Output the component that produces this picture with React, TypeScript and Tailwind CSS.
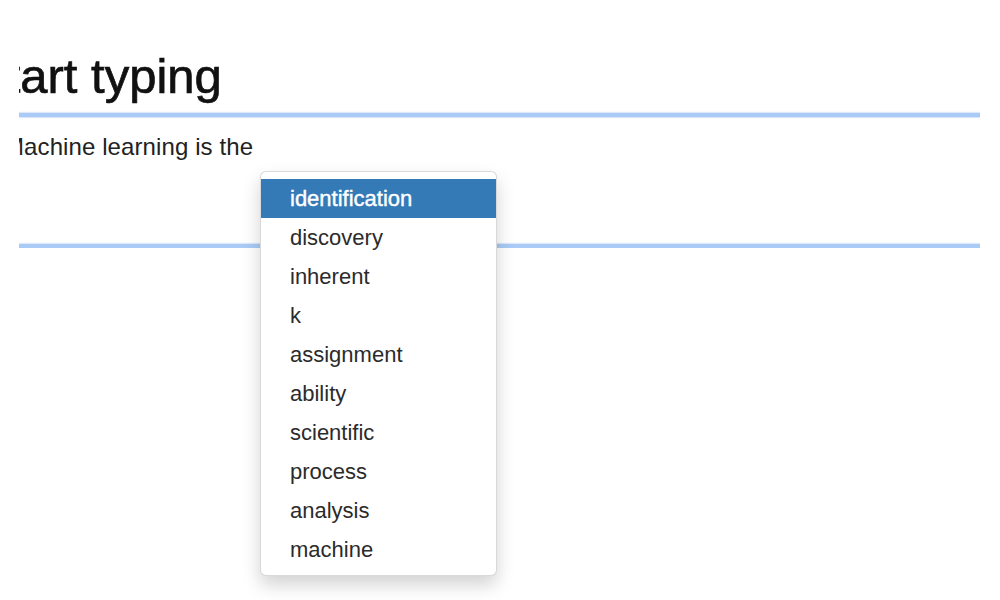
import React from "react";

const items = [
  "identification",
  "discovery",
  "inherent",
  "k",
  "assignment",
  "ability",
  "scientific",
  "process",
  "analysis",
  "machine",
];

export default function App() {
  return (
    <div
      className="relative w-[1000px] h-[600px] overflow-hidden bg-white"
      style={{ fontFamily: '"Liberation Sans", Arial, sans-serif' }}
    >
      <div className="ml-[19px] w-[961px] overflow-hidden pt-[52px]">
        <h1 className="-ml-[45px] text-[49px] leading-[48px] font-normal text-[#111] whitespace-nowrap [-webkit-text-stroke:0.7px_#111]">
          Start typing
        </h1>
        <div className="mt-[13px] h-[4px] bg-[#a9cbf5] shadow-[0_0_1px_1px_#dbe9fb]" />
        <div className="pt-[18px] h-[127px]">
          <p className="-ml-[15px] text-[24px] leading-[24px] text-[#222] whitespace-nowrap [letter-spacing:0.1px]">
            Machine learning is the
          </p>
        </div>
        <div className="h-[4px] bg-[#a9cbf5] shadow-[0_0_1px_1px_#dbe9fb]" />
      </div>

      <div className="absolute left-[260px] top-[171px] w-[237px] rounded-[6px] border border-[rgba(0,0,0,0.15)] bg-white pt-[7px] pb-[6px] shadow-[0_9px_18px_rgba(0,0,0,0.175)]">
        {items.map((it, i) => (
          <div
            key={it}
            className={
              i === 0
                ? "h-[39px] flex items-center pl-[29px] text-[22px] bg-[#337ab7] text-white [-webkit-text-stroke:0.4px_#fff]"
                : "h-[39px] flex items-center pl-[29px] text-[22px] text-[#2b2b2b]"
            }
          >
            {it}
          </div>
        ))}
      </div>
    </div>
  );
}
